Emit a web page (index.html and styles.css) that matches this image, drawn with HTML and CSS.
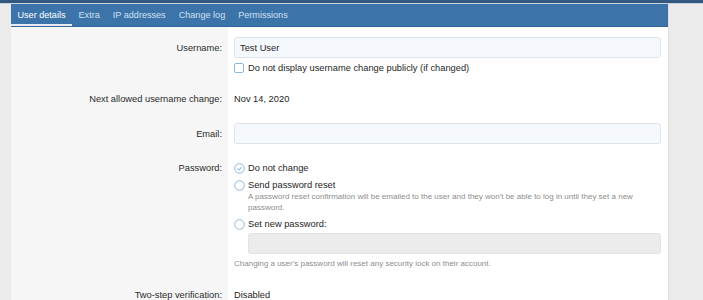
FILE: index.html
```html
<!DOCTYPE html>
<html>
<head>
<meta charset="utf-8">
<link rel="stylesheet" href="styles.css">
</head>
<body>
<div class="topbar"></div>
<div class="page">
  <div class="panel">
    <div class="tabs">
      <span class="tab tab--active">User details</span>
      <span class="tab">Extra</span>
      <span class="tab">IP addresses</span>
      <span class="tab">Change log</span>
      <span class="tab">Permissions</span>
    </div>
    <div class="form">
      <div class="row row--first">
        <div class="label label--input">Username:</div>
        <div class="value">
          <div class="input">Test User</div>
          <div class="check">
            <span class="box"></span>
            <span>Do not display username change publicly (if changed)</span>
          </div>
        </div>
      </div>
      <div class="row">
        <div class="label">Next allowed username change:</div>
        <div class="value"><div class="line">Nov 14, 2020</div></div>
      </div>
      <div class="row">
        <div class="label label--input">Email:</div>
        <div class="value"><div class="input"></div></div>
      </div>
      <div class="row">
        <div class="label">Password:</div>
        <div class="value">
          <div class="radio">
            <svg class="radio-icon" viewBox="0 0 11 11" width="11" height="11"><circle cx="5.5" cy="5.5" r="4.8" fill="none" stroke="#8fb7dc" stroke-width="1"/><path d="M3.4 5.6 L4.9 7 L7.6 4.1" fill="none" stroke="#6fa2d3" stroke-width="1"/></svg>
            <span>Do not change</span>
          </div>
          <div class="radio radio--gap">
            <svg class="radio-icon" viewBox="0 0 11 11" width="11" height="11"><circle cx="5.5" cy="5.5" r="4.8" fill="#fff" stroke="#8fb7dc" stroke-width="1"/></svg>
            <span>Send password reset</span>
          </div>
          <div class="hint hint--indent">A password reset confirmation will be emailed to the user and they won't be able to log in until they set a new password.</div>
          <div class="radio radio--gap2">
            <svg class="radio-icon" viewBox="0 0 11 11" width="11" height="11"><circle cx="5.5" cy="5.5" r="4.8" fill="#fff" stroke="#8fb7dc" stroke-width="1"/></svg>
            <span>Set new password:</span>
          </div>
          <div class="input input--disabled input--indent"></div>
          <div class="hint hint--after">Changing a user's password will reset any security lock on their account.</div>
        </div>
      </div>
      <div class="row row--last">
        <div class="label">Two-step verification:</div>
        <div class="value"><div class="line">Disabled</div></div>
      </div>
    </div>
  </div>
</div>
</body>
</html>
```

FILE: styles.css
```css
html, body {
  margin: 0;
  padding: 0;
  background: #ebebeb;
  font-family: "Liberation Sans", Arial, Helvetica, sans-serif;
  font-size: 9.3px;
  color: #1e1e1e;
  overflow: hidden;
}

.topbar {
  height: 3px;
  background: #33587f;
  border-bottom: 1px solid #c9d2dc;
}

.page {
  padding: 0 34px 0 11px;
}

.panel {
  background: #fff;
  border-right: 1px solid #dedede;
}

.tabs {
  display: flex;
  height: 22px;
  background: #3c74aa;
  border-bottom: 1px solid #35689a;
}

.tab {
  display: flex;
  align-items: center;
  padding: 0 6.5px;
  color: #cfe0f2;
  font-size: 9.1px;
  box-sizing: border-box;
  border-bottom: 2px solid transparent;
  padding-top: 1px;
}

.tab--active {
  color: #ffffff;
  border-bottom-color: #e6edf5;
}

.form {
  display: flex;
  flex-direction: column;
}

.row {
  display: grid;
  grid-template-columns: 217px 1fr;
}

.label {
  background: #f6f6f6;
  text-align: right;
  padding: 8.5px 6px 8.5px 0;
  line-height: 14px;
  color: #2a2a2a;
}

.row--first .label {
  padding-top: 10px;
}

.label.label--input {
  padding-top: 12px;
}

.row--first .label.label--input {
  padding-top: 13.5px;
}

.row--last .label,
.row--last .value {
  padding-top: 10px;
}

.value {
  padding: 8.5px 7px 8.5px 6px;
  line-height: 14px;
}

.row--first .value {
  padding-top: 10px;
}

.line {
  line-height: 14px;
}

.input {
  box-sizing: border-box;
  height: 21px;
  border: 1px solid #dfe4ea;
  border-radius: 3px;
  background: #f5f8fc;
  padding: 0 5px;
  display: flex;
  align-items: center;
  color: #1e1e1e;
}

.input--disabled {
  background: #ececec;
  border-color: #e2e2e2;
}

.input--indent {
  margin-left: 14px;
  margin-top: 1.5px;
}

.check {
  display: flex;
  align-items: center;
  margin-top: 3px;
  height: 14px;
}

.box {
  display: inline-block;
  box-sizing: border-box;
  width: 9.5px;
  height: 9.5px;
  border: 1px solid #8fb7dc;
  border-radius: 2px;
  margin-right: 4.5px;
  background: #fff;
}

.radio {
  display: flex;
  align-items: center;
  height: 14px;
}

.radio--gap {
  margin-top: 3px;
}

.radio--gap2 {
  margin-top: 4px;
}

.radio-icon {
  margin-right: 3px;
  flex: none;
}

.hint {
  font-size: 8px;
  line-height: 10.5px;
  color: #8d8d8d;
}

.hint--indent {
  padding-left: 14px;
  padding-right: 20px;
}

.hint--after {
  margin-top: 5px;
}
```
